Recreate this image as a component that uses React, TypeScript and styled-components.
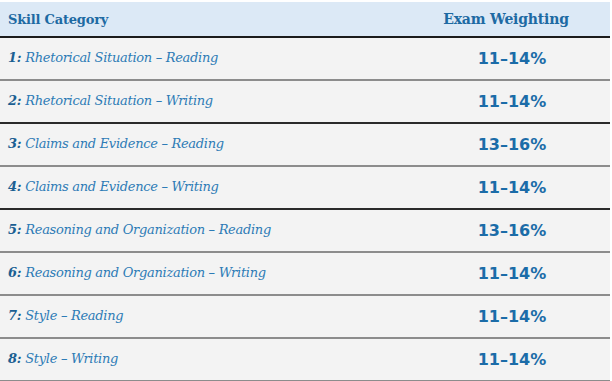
import React from 'react';
import styled, { createGlobalStyle } from 'styled-components';

const GlobalStyle = createGlobalStyle`
  *, *::before, *::after {
    box-sizing: border-box;
  }
  html, body {
    margin: 0;
    padding: 0;
    background: #ffffff;
  }
`;

const Table = styled.div`
  width: 610px;
  margin-top: 2px;
  display: grid;
  grid-template-columns: 420px 1fr;
`;

const HeadCell = styled.div<{ $align?: 'left' | 'center' }>`
  height: 36px;
  display: flex;
  align-items: center;
  justify-content: ${p => (p.$align === 'center' ? 'center' : 'flex-start')};
  padding: ${p => (p.$align === 'center' ? '0 18px 0 0' : '0 0 0 8px')};
  background: #dce9f6;
  border-bottom: 2px solid #1c1c1c;
  font-family: 'DejaVu Serif', serif;
  font-weight: bold;
  font-size: ${p => (p.$align === 'center' ? '14px' : '13px')};
  color: #1d6aa3;
  letter-spacing: -0.2px;
`;

const Cell = styled.div<{ $dark: boolean }>`
  height: 43px;
  display: flex;
  align-items: center;
  background: #f3f3f3;
  border-bottom: ${p => (p.$dark ? '2px solid #2a2a2a' : '2px solid #8c8c8c')};
`;

const SkillCell = styled(Cell)`
  padding-left: 8px;
  padding-bottom: 2px;
  font-family: 'DejaVu Serif', serif;
  font-style: italic;
  font-size: 13px;
  color: #2d7bb6;
  letter-spacing: -0.3px;
`;

const Num = styled.b`
  color: #1b5f92;
  margin-right: 4px;
`;

const WeightCell = styled(Cell)`
  justify-content: center;
  padding-right: 6px;
  font-family: 'DejaVu Sans', sans-serif;
  font-weight: bold;
  font-size: 16px;
  color: #1b6ca8;
`;

const rows = [
  { skill: 'Rhetorical Situation – Reading', weight: '11–14%' },
  { skill: 'Rhetorical Situation – Writing', weight: '11–14%' },
  { skill: 'Claims and Evidence – Reading', weight: '13–16%' },
  { skill: 'Claims and Evidence – Writing', weight: '11–14%' },
  { skill: 'Reasoning and Organization – Reading', weight: '13–16%' },
  { skill: 'Reasoning and Organization – Writing', weight: '11–14%' },
  { skill: 'Style – Reading', weight: '11–14%' },
  { skill: 'Style – Writing', weight: '11–14%' },
];

export default function App() {
  return (
    <>
      <GlobalStyle />
      <Table>
        <HeadCell>Skill Category</HeadCell>
        <HeadCell $align="center">Exam Weighting</HeadCell>
        {rows.map((r, i) => {
          const dark = i === 1 || i === 3;
          return (
            <React.Fragment key={i}>
              <SkillCell $dark={dark}>
                <Num>{i + 1}:</Num>
                {r.skill}
              </SkillCell>
              <WeightCell $dark={dark}>{r.weight}</WeightCell>
            </React.Fragment>
          );
        })}
      </Table>
    </>
  );
}
